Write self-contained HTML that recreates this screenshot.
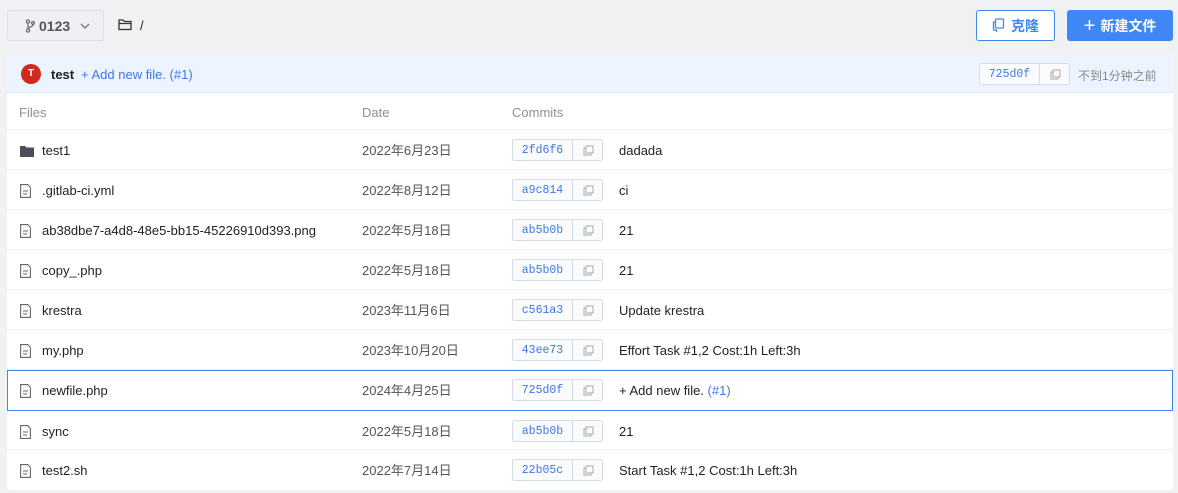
<!DOCTYPE html>
<html><head><meta charset="utf-8"><style>
*{box-sizing:border-box;margin:0;padding:0}
body{width:1178px;height:493px;background:#f0f1f3;font-family:"Liberation Sans","Noto Sans CJK SC",sans-serif;font-size:13px;color:#222;position:relative;overflow:hidden}
.abs{position:absolute}
.branch{left:7px;top:10px;width:97px;height:31px;border:1px solid #dcdfe6;border-radius:3px;background:#eef0f3;display:flex;align-items:center;padding-left:17px;font-weight:bold;color:#555;font-size:14px}
.btn{top:10px;height:31px;border-radius:3px;display:flex;align-items:center;justify-content:center;font-weight:bold;font-size:14px}
.card{left:7px;top:54px;width:1166px;height:436px;background:#fff;border-radius:3px;overflow:hidden}
.head{height:39px;background:#edf4ff;border-bottom:1px solid #e3e9f2;position:relative}
.row{position:absolute;left:0;width:1166px;height:40px;border-bottom:1px solid #f0f0f0}
.row span{position:absolute;top:13px;line-height:16px}
.badge{position:absolute;left:505px;top:9px;width:91px;height:22px;border:1px solid #d5dbe5;border-radius:3px;background:#fafbfd;font-family:"Liberation Mono",monospace;font-size:11.5px;color:#3e78e6}
.badge .h{position:absolute;left:0;top:0;width:60px;height:20px;line-height:21px;text-align:center;border-right:1px solid #d5dbe5}
.badge svg{position:absolute;left:70px;top:5px}
.fi{position:absolute;left:13px;top:14px}
.date{left:355px;color:#555}
.name{left:35px}
.msg{left:612px}
</style></head><body>
<div class="abs branch"><svg width="10" height="14" viewBox="0 0 10 14" style="margin-right:4px"><circle cx="3" cy="2.5" r="1.6" fill="none" stroke="#666" stroke-width="1.2"/><circle cx="3" cy="11.5" r="1.6" fill="none" stroke="#666" stroke-width="1.2"/><circle cx="8" cy="4" r="1.4" fill="none" stroke="#666" stroke-width="1.2"/><path d="M3 4v6M8 5.5c0 3-5 2-5 4.5" fill="none" stroke="#666" stroke-width="1.2"/></svg>0123<svg width="10" height="6" viewBox="0 0 10 6" style="margin-left:10px"><path d="M1 1l4 4 4-4" fill="none" stroke="#777" stroke-width="1.3"/></svg></div>
<svg class="abs" style="left:118px;top:18px" width="15" height="13" viewBox="0 0 15 13"><path d="M1 2h4l1.5 1.5H13v8H1z M1 5.5h12" fill="none" stroke="#333" stroke-width="1.3"/></svg>
<div class="abs" style="left:140px;top:18px;font-size:13px">/</div>
<div class="abs btn" style="left:976px;width:79px;border:1px solid #3e87f5;background:#fff;color:#3e87f5"><svg width="13" height="15" viewBox="0 0 13 15" style="margin-right:6px"><rect x="3.5" y="1" width="8" height="9" rx="1" fill="none" stroke="#3e87f5" stroke-width="1.3"/><path d="M3.5 4H1.5v8h3v2" fill="none" stroke="#3e87f5" stroke-width="1.3"/></svg>克隆</div>
<div class="abs btn" style="left:1067px;width:106px;background:#3e87f5;color:#fff"><span style="font-size:20px;font-weight:normal;margin-right:5px;line-height:14px">+</span>新建文件</div>
<div class="abs card">
<div class="head">
<div class="abs" style="left:14px;top:10px;width:20px;height:20px;border-radius:50%;background:#d02a1e;color:#fff;font-size:10px;font-weight:bold;text-align:center;line-height:20px">T</div>
<div class="abs" style="left:44px;top:13px;font-weight:bold;font-size:13px">test</div>
<div class="abs" style="left:74px;top:13px;color:#3e78e6">+ Add new file. (#1)</div>
<div class="badge" style="left:972px;top:9px;width:91px;border-color:#d5dbe5"><div class="h" style="width:60px">725d0f</div><svg width="11" height="11" viewBox="0 0 11 11" style="left:70px"><rect x="3" y="1" width="7" height="7" fill="none" stroke="#aaa"/><path d="M3 3H1v7h7V8" fill="none" stroke="#aaa"/></svg></div>
<div class="abs" style="left:1071px;top:13px;color:#888;font-size:12px">不到1分钟之前</div>
</div>
<div class="row" style="top:39px;height:37px"><span style="left:12px;top:12px;color:#8a8f99">Files</span><span style="left:355px;top:12px;color:#8a8f99">Date</span><span style="left:505px;top:12px;color:#8a8f99">Commits</span></div>
<div class="row" style="top:76px"><svg class="fi" width="14" height="12" viewBox="0 0 14 12" style="top:15px"><path d="M0 1h5l1.5 1.5H14V12H0z" fill="#4a4e5a"/></svg><span class="name">test1</span><span class="date">2022年6月23日</span><div class="badge"><div class="h">2fd6f6</div><svg width="11" height="11" viewBox="0 0 11 11"><rect x="3" y="1" width="7" height="7" fill="none" stroke="#aaa"/><path d="M3 3H1v7h7V8" fill="none" stroke="#aaa"/></svg></div><span class="msg">dadada</span></div>
<div class="row" style="top:116px"><svg class="fi" width="11" height="14" viewBox="0 0 11 14"><path d="M.6.6h7l2.8 2.8v10H.6z M3 7h5M3 10h4" fill="none" stroke="#666" stroke-width="1.1"/></svg><span class="name">.gitlab-ci.yml</span><span class="date">2022年8月12日</span><div class="badge"><div class="h">a9c814</div><svg width="11" height="11" viewBox="0 0 11 11"><rect x="3" y="1" width="7" height="7" fill="none" stroke="#aaa"/><path d="M3 3H1v7h7V8" fill="none" stroke="#aaa"/></svg></div><span class="msg">ci</span></div>
<div class="row" style="top:156px"><svg class="fi" width="11" height="14" viewBox="0 0 11 14"><path d="M.6.6h7l2.8 2.8v10H.6z M3 7h5M3 10h4" fill="none" stroke="#666" stroke-width="1.1"/></svg><span class="name">ab38dbe7-a4d8-48e5-bb15-45226910d393.png</span><span class="date">2022年5月18日</span><div class="badge"><div class="h">ab5b0b</div><svg width="11" height="11" viewBox="0 0 11 11"><rect x="3" y="1" width="7" height="7" fill="none" stroke="#aaa"/><path d="M3 3H1v7h7V8" fill="none" stroke="#aaa"/></svg></div><span class="msg">21</span></div>
<div class="row" style="top:196px"><svg class="fi" width="11" height="14" viewBox="0 0 11 14"><path d="M.6.6h7l2.8 2.8v10H.6z M3 7h5M3 10h4" fill="none" stroke="#666" stroke-width="1.1"/></svg><span class="name">copy_.php</span><span class="date">2022年5月18日</span><div class="badge"><div class="h">ab5b0b</div><svg width="11" height="11" viewBox="0 0 11 11"><rect x="3" y="1" width="7" height="7" fill="none" stroke="#aaa"/><path d="M3 3H1v7h7V8" fill="none" stroke="#aaa"/></svg></div><span class="msg">21</span></div>
<div class="row" style="top:236px"><svg class="fi" width="11" height="14" viewBox="0 0 11 14"><path d="M.6.6h7l2.8 2.8v10H.6z M3 7h5M3 10h4" fill="none" stroke="#666" stroke-width="1.1"/></svg><span class="name">krestra</span><span class="date">2023年11月6日</span><div class="badge"><div class="h">c561a3</div><svg width="11" height="11" viewBox="0 0 11 11"><rect x="3" y="1" width="7" height="7" fill="none" stroke="#aaa"/><path d="M3 3H1v7h7V8" fill="none" stroke="#aaa"/></svg></div><span class="msg">Update krestra</span></div>
<div class="row" style="top:276px"><svg class="fi" width="11" height="14" viewBox="0 0 11 14"><path d="M.6.6h7l2.8 2.8v10H.6z M3 7h5M3 10h4" fill="none" stroke="#666" stroke-width="1.1"/></svg><span class="name">my.php</span><span class="date">2023年10月20日</span><div class="badge"><div class="h">43ee73</div><svg width="11" height="11" viewBox="0 0 11 11"><rect x="3" y="1" width="7" height="7" fill="none" stroke="#aaa"/><path d="M3 3H1v7h7V8" fill="none" stroke="#aaa"/></svg></div><span class="msg">Effort Task #1,2 Cost:1h Left:3h</span></div>
<div class="row" style="top:316px;border:1px solid #3e87f5;height:41px;top:316px"><svg class="fi" width="11" height="14" viewBox="0 0 11 14" style="left:12px;top:13px"><path d="M.6.6h7l2.8 2.8v10H.6z M3 7h5M3 10h4" fill="none" stroke="#666" stroke-width="1.1"/></svg><span class="name" style="left:34px;top:12px">newfile.php</span><span class="date" style="left:354px;top:12px">2024年4月25日</span><div class="badge" style="left:504px;top:8px"><div class="h">725d0f</div><svg width="11" height="11" viewBox="0 0 11 11"><rect x="3" y="1" width="7" height="7" fill="none" stroke="#aaa"/><path d="M3 3H1v7h7V8" fill="none" stroke="#aaa"/></svg></div><span class="msg" style="left:611px;top:12px">+ Add new file. <span style="position:static;color:#3e78e6">(#1)</span></span></div>
<div class="row" style="top:357px;height:39px"><svg class="fi" width="11" height="14" viewBox="0 0 11 14"><path d="M.6.6h7l2.8 2.8v10H.6z M3 7h5M3 10h4" fill="none" stroke="#666" stroke-width="1.1"/></svg><span class="name">sync</span><span class="date">2022年5月18日</span><div class="badge"><div class="h">ab5b0b</div><svg width="11" height="11" viewBox="0 0 11 11"><rect x="3" y="1" width="7" height="7" fill="none" stroke="#aaa"/><path d="M3 3H1v7h7V8" fill="none" stroke="#aaa"/></svg></div><span class="msg">21</span></div>
<div class="row" style="top:396px;border:none"><svg class="fi" width="11" height="14" viewBox="0 0 11 14"><path d="M.6.6h7l2.8 2.8v10H.6z M3 7h5M3 10h4" fill="none" stroke="#666" stroke-width="1.1"/></svg><span class="name">test2.sh</span><span class="date">2022年7月14日</span><div class="badge"><div class="h">22b05c</div><svg width="11" height="11" viewBox="0 0 11 11"><rect x="3" y="1" width="7" height="7" fill="none" stroke="#aaa"/><path d="M3 3H1v7h7V8" fill="none" stroke="#aaa"/></svg></div><span class="msg">Start Task #1,2 Cost:1h Left:3h</span></div>
</div>
</body></html>
